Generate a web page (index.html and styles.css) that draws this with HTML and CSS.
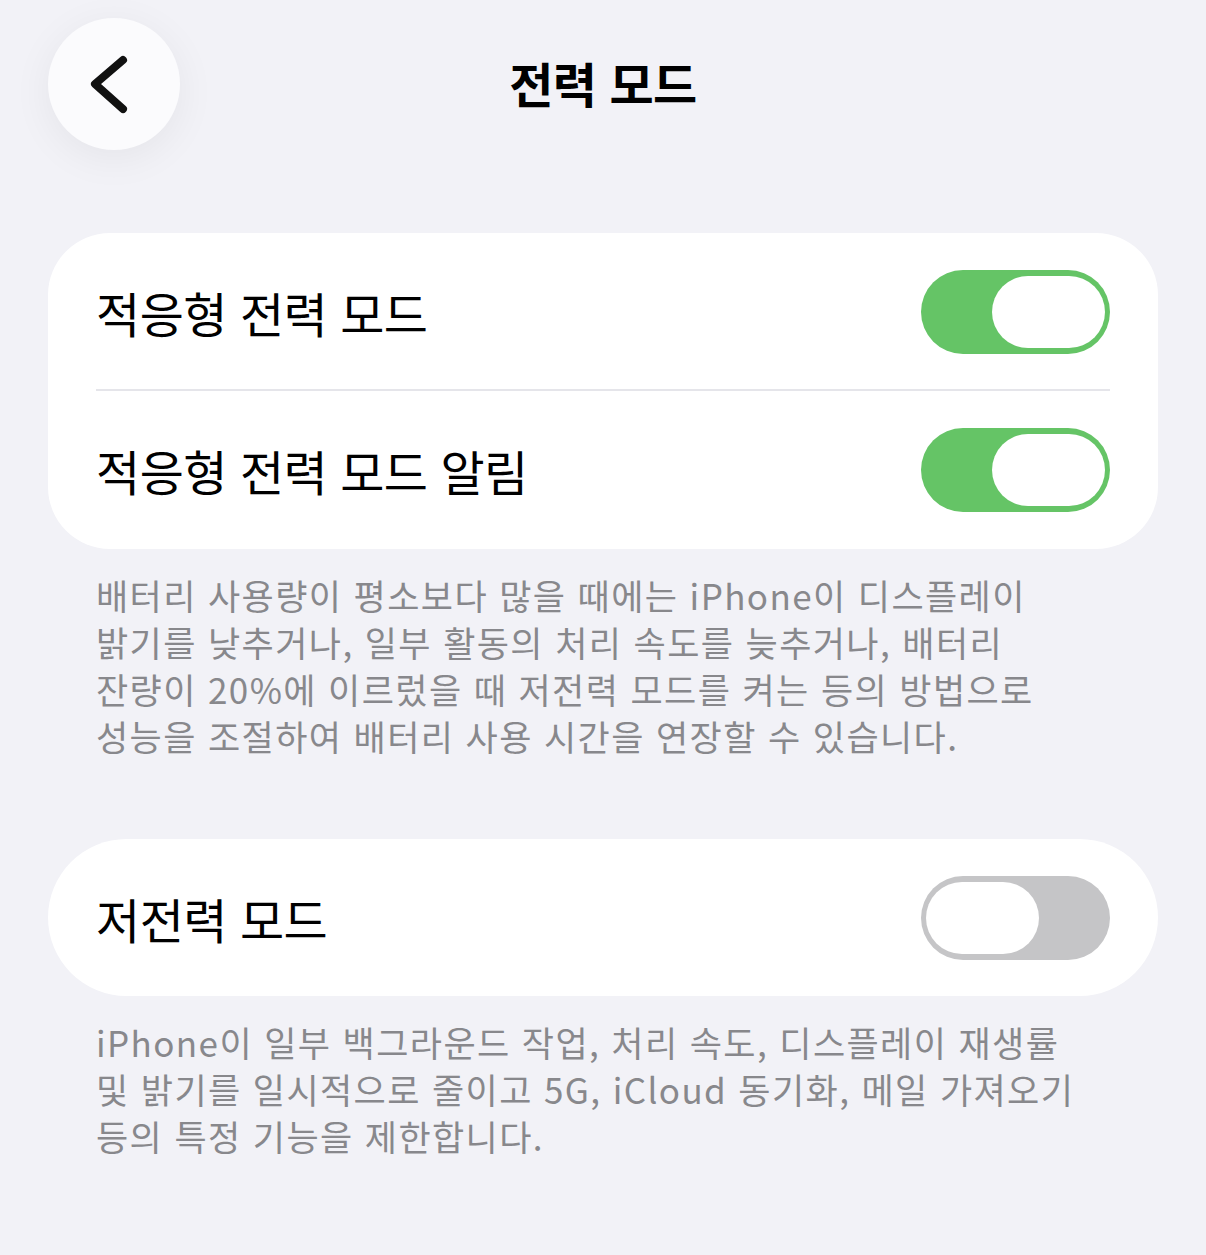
FILE: index.html
```html
<!DOCTYPE html>
<html lang="ko">
<head>
  <meta charset="UTF-8">
  <meta name="viewport" content="width=device-width, initial-scale=1">
  <title>전력 모드</title>
  <link rel="stylesheet" href="styles.css">
</head>
<body>
  <header class="topbar">
    <button type="button" class="back" aria-label="뒤로">
      <svg width="132" height="132" viewBox="0 0 132 132">
        <path d="M75 42 L47 66 L75 91" fill="none" stroke="#111" stroke-width="8" stroke-linecap="round" stroke-linejoin="round"/>
      </svg>
    </button>
    <h1 class="title">전력 모드</h1>
    <span></span>
  </header>

  <section class="card">
    <div class="row">
      <span class="label">적응형 전력 모드</span>
      <span class="toggle on"><span class="knob"></span></span>
    </div>
    <div class="sep"></div>
    <div class="row">
      <span class="label">적응형 전력 모드 알림</span>
      <span class="toggle on"><span class="knob"></span></span>
    </div>
  </section>
  <p class="note">배터리 사용량이 평소보다 많을 때에는 iPhone이 디스플레이<br>밝기를 낮추거나, 일부 활동의 처리 속도를 늦추거나, 배터리<br>잔량이 20%에 이르렀을 때 저전력 모드를 켜는 등의 방법으로<br>성능을 조절하여 배터리 사용 시간을 연장할 수 있습니다.</p>

  <section class="card pill">
    <div class="row">
      <span class="label">저전력 모드</span>
      <span class="toggle"><span class="knob"></span></span>
    </div>
  </section>
  <p class="note last">iPhone이 일부 백그라운드 작업, 처리 속도, 디스플레이 재생률<br>및 밝기를 일시적으로 줄이고 5G, iCloud 동기화, 메일 가져오기<br>등의 특정 기능을 제한합니다.</p>
</body>
</html>
```

FILE: styles.css
```css
body {
  margin: 0;
  padding: 18px 48px 40px;
  background: #f2f2f7;
  font-family: "Noto Sans CJK KR", "Noto Sans", sans-serif;
  color: #000;
}
.topbar {
  display: grid;
  grid-template-columns: 1fr auto 1fr;
  align-items: center;
  height: 132px;
  margin-bottom: 83px;
}
.back {
  width: 132px;
  height: 132px;
  padding: 0;
  border: none;
  border-radius: 50%;
  background: #fbfbfd;
  box-shadow: 0 8px 40px rgba(0, 0, 0, 0.06);
  cursor: pointer;
}
.back svg {
  display: block;
}
.title {
  margin: 0 0 4px;
  font-size: 48px;
  font-weight: 700;
  letter-spacing: -0.5px;
}
.card {
  background: #fff;
  border-radius: 62px;
}
.card.pill {
  border-radius: 79px;
}
.row {
  display: flex;
  align-items: center;
  justify-content: space-between;
  height: 158px;
  padding: 0 48px;
}
.sep {
  height: 2px;
  margin: -2px 48px 0;
  background: #e5e5ea;
}
.card.pill .row {
  height: 157px;
}
.label {
  font-size: 48px;
  letter-spacing: -0.5px;
}
.toggle {
  display: flex;
  justify-content: flex-start;
  align-items: center;
  box-sizing: border-box;
  width: 189px;
  height: 84px;
  padding: 0 5px;
  border-radius: 42px;
  background: #c5c5c7;
}
.toggle.on {
  justify-content: flex-end;
  background: #65c466;
}
.knob {
  width: 113px;
  height: 72px;
  border-radius: 36px;
  background: #fff;
}
.note {
  margin: 22px 0 80px;
  padding-left: 48px;
  font-size: 35px;
  line-height: 47px;
  letter-spacing: 1.4px;
  color: #88888c;
  white-space: nowrap;
}
.note.last {
  margin-bottom: 0;
}
```
